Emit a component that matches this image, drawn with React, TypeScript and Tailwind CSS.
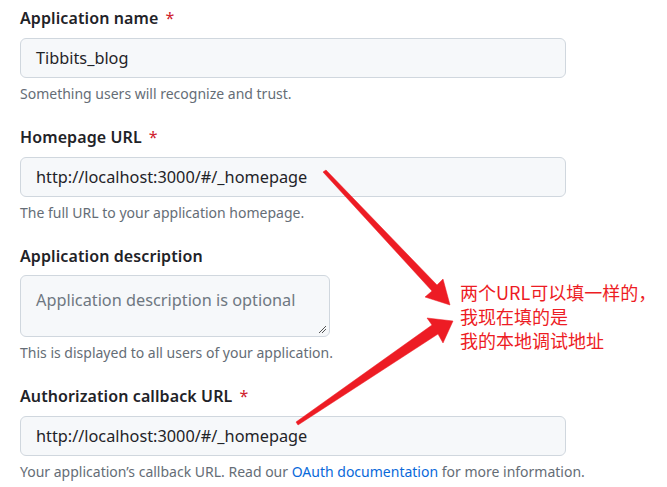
import React from "react";

function Field({
  label,
  required,
  value,
  help,
}: {
  label: string;
  required?: boolean;
  value: string;
  help: React.ReactNode;
}) {
  return (
    <div className="flex flex-col">
      <div className="h-[24px] leading-[24px] text-[16px] font-semibold text-[#1f2328] tracking-[0.1px]">
        {label}
        {required && <span className="text-[#cf222e] ml-[7px] font-normal">*</span>}
      </div>
      <div className="mt-[8px] w-[546px] h-[40px] rounded-[6px] border border-[#d0d7de] bg-[#f6f8fa] flex items-center pl-[15px] text-[16.3px] text-[#1f2328]">
        {value}
      </div>
      <div className="mt-[6px] h-[20px] leading-[20px] text-[14px] text-[#656d76]">{help}</div>
    </div>
  );
}

export default function App() {
  return (
    <div
      className="relative w-[667px] h-[487px] bg-white overflow-hidden"
      style={{ fontFamily: '"Noto Sans", "Open Sans", sans-serif' }}
    >
      <div className="flex flex-col gap-[21px] pl-[20px] pt-[6px]">
        <Field
          label="Application name"
          required
          value="Tibbits_blog"
          help="Something users will recognize and trust."
        />
        <Field
          label="Homepage URL"
          required
          value="http://localhost:3000/#/_homepage"
          help="The full URL to your application homepage."
        />
        <div className="flex flex-col">
          <div className="h-[24px] leading-[24px] text-[16px] font-semibold text-[#1f2328] tracking-[0.1px]">
            Application description
          </div>
          <div className="relative mt-[7px] w-[310px] h-[62px] rounded-[6px] border border-[#d0d7de] bg-[#f6f8fa] pl-[15px] pt-[12px] text-[16.3px] leading-[24px] text-[#6e7781]">
            Application description is optional
            <svg className="absolute right-[2px] bottom-[2px]" width="10" height="10" viewBox="0 0 10 10">
              <path d="M9 2 L2 9 M9 5 L5 9" stroke="#555" strokeWidth="1" />
            </svg>
          </div>
          <div className="mt-[6px] h-[20px] leading-[20px] text-[14px] text-[#656d76]">
            This is displayed to all users of your application.
          </div>
        </div>
        <Field
          label="Authorization callback URL"
          required
          value="http://localhost:3000/#/_homepage"
          help={
            <>
              Your application’s callback URL. Read our{" "}
              <span className="text-[#0969da]">OAuth documentation</span> for more information.
            </>
          }
        />
      </div>

      <svg className="absolute left-0 top-0 pointer-events-none" width="667" height="487">
        <g fill="#ed1c24" stroke="#ed1c24" strokeLinejoin="round">
          <path d="M323 172 L326 170 L437 285 L443 279 L450 305 L425 297 L432 291 Z" strokeWidth="0.5" />
          <path d="M298 425 L296 422 L432 325 L427 318 L453 321 L443 343 L438 334 Z" strokeWidth="0.5" />
        </g>
      </svg>

      <div
        className="absolute left-[460px] top-[280px] text-[18px] leading-[24px] text-[#ed1c24]"
        style={{ fontFamily: '"Noto Sans CJK SC", "Noto Sans", sans-serif' }}
      >
        <div>两个URL可以填一样的，</div>
        <div>我现在填的是</div>
        <div>我的本地调试地址</div>
      </div>
    </div>
  );
}
